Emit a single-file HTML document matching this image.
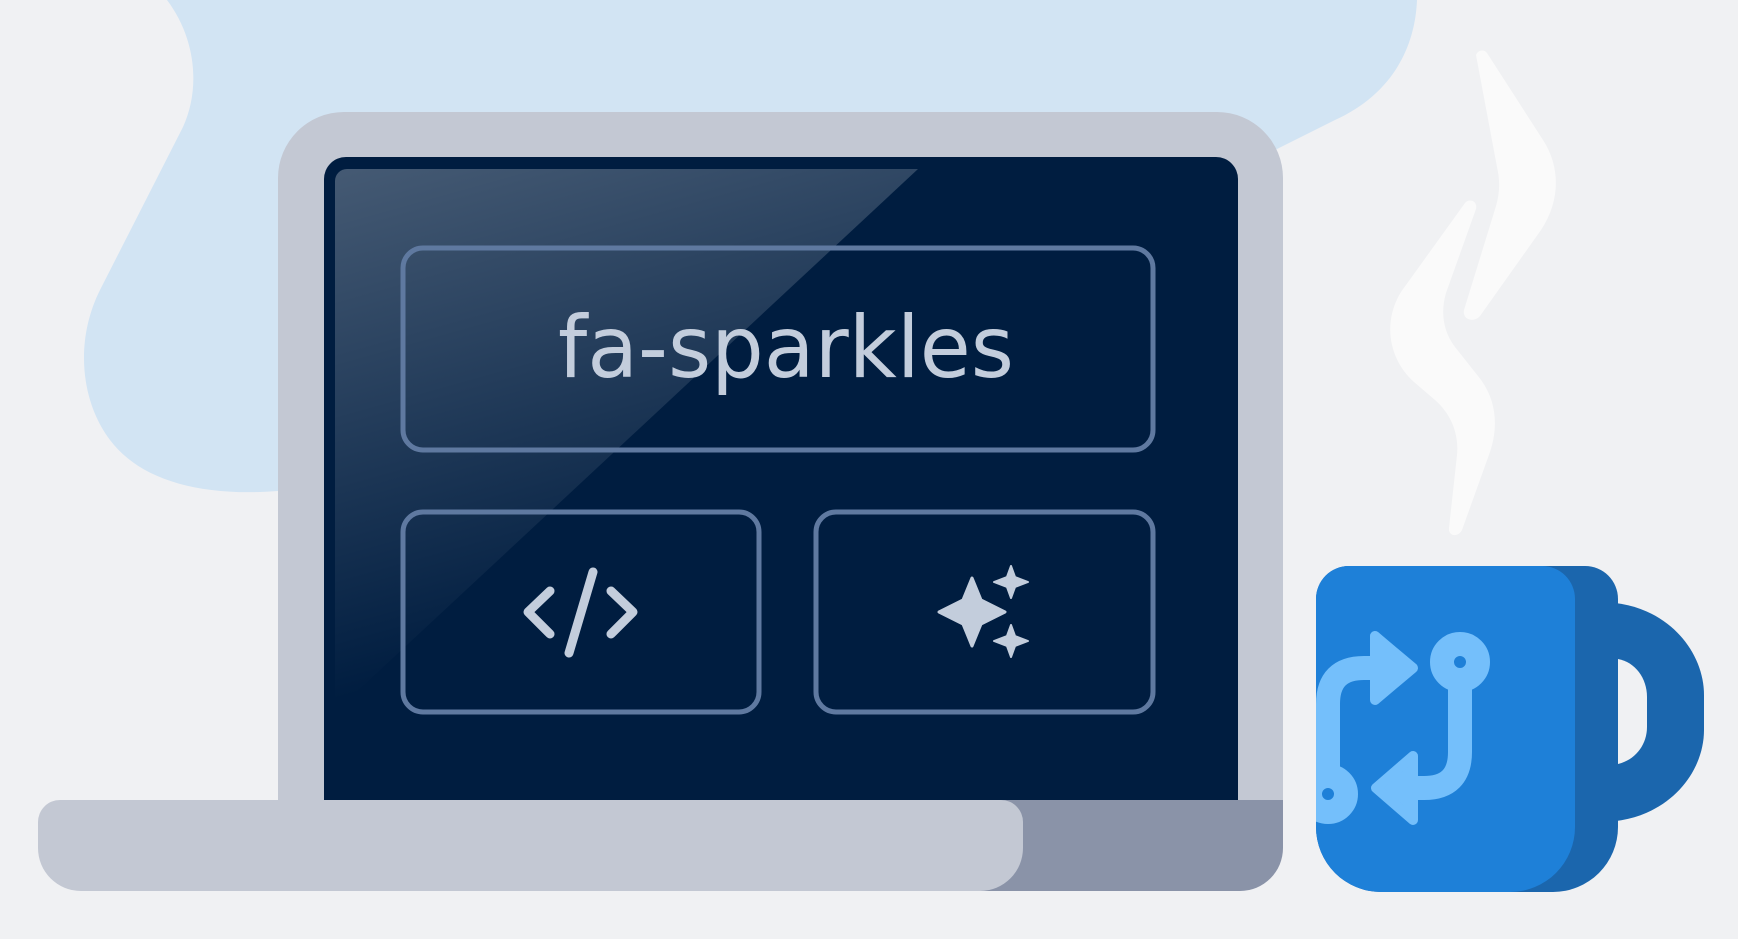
<!DOCTYPE html>
<html><head><meta charset="utf-8"><style>
html,body{margin:0;padding:0;background:#f0f1f3;}
svg{display:block}
</style></head><body>
<svg width="1738" height="939" viewBox="0 0 1738 939" xmlns="http://www.w3.org/2000/svg">
<defs>
<linearGradient id="gl" x1="0" y1="0" x2="0.3" y2="1">
<stop offset="0" stop-color="#ffffff" stop-opacity="0.27"/>
<stop offset="0.9" stop-color="#ffffff" stop-opacity="0"/>
</linearGradient>
<clipPath id="mugclip"><path d="M1349,566 H1542 A33,33 0 0 1 1575,599 V827 A65,65 0 0 1 1510,892 H1381 A65,65 0 0 1 1316,827 V599 A33,33 0 0 1 1349,566 Z"/></clipPath>
</defs>
<path fill="#d2e4f3" d="M167,0 H1417 C1415,50 1390,95 1335,120 L1275,150 L1275,500 L278,491 C200,497 140,480 110,440 C80,400 75,340 100,290 L183,127 C200,90 197,40 167,0 Z"/>
<path fill="#fafafa" d="M1476,55 C1478,50 1484,49 1487,53 L1543,140 C1560,166 1561,200 1541,230 L1480,316 C1474,323 1462,320 1464,310 L1496,206 C1500,192 1500,180 1497,167 Z"/>
<path fill="#fafafa" d="M1465,203 C1469,198 1478,201 1476,209 L1446,293 C1441,310 1442,330 1455,347 L1478,376 C1496,398 1499,425 1490,452 L1462,530 C1458,538 1448,536 1449,528 L1457,455 C1459,435 1452,415 1435,400 L1414,382 C1386,357 1382,315 1406,285 Z"/>
<path fill="#c3c8d3" d="M344,112 H1217 A66,66 0 0 1 1283,178 V800 H278 V178 A66,66 0 0 1 344,112 Z"/>
<path fill="#001d40" d="M346,157 H1216 A22,22 0 0 1 1238,179 V800 H324 V179 A22,22 0 0 1 346,157 Z"/>
<path fill="url(#gl)" d="M347,169 H918 L335,712 V181 A12,12 0 0 1 347,169 Z"/>
<g fill="none" stroke="#5f79a0" stroke-width="5">
<rect x="403" y="248" width="750" height="202" rx="20"/>
<rect x="403" y="512" width="356" height="200" rx="20"/>
<rect x="816" y="512" width="337" height="200" rx="20"/>
</g>
<text x="786" y="377" text-anchor="middle" font-family="DejaVu Sans, Liberation Sans, sans-serif" font-size="86" fill="#c3cddc" textLength="456" lengthAdjust="spacingAndGlyphs">fa-sparkles</text>
<g fill="none" stroke="#c3cddc" stroke-width="9" stroke-linecap="round" stroke-linejoin="round">
<path d="M550,591 L528,612 L550,634"/>
<path d="M593,572 L569,653"/>
<path d="M611,591 L633,612 L611,634"/>
</g>
<g fill="#c3cddc">
<path d="M972,578 L981,600 L1005,612 L981,624 L972,646 L963,624 L939,612 L963,600 Z" stroke="#c3cddc" stroke-width="3" stroke-linejoin="round"/>
<path d="M1011,566 L1015,577 L1028,582 L1015,587 L1011,598 L1007,587 L994,582 L1007,577 Z" stroke="#c3cddc" stroke-width="2" stroke-linejoin="round"/>
<path d="M1011,625 L1015,636 L1028,641 L1015,646 L1011,657 L1007,646 L994,641 L1007,636 Z" stroke="#c3cddc" stroke-width="2" stroke-linejoin="round"/>
</g>
<path fill="#8a93a8" d="M900,800 H1283 V848 A43,43 0 0 1 1240,891 H980 Z"/>
<path fill="#c3c8d3" d="M60,800 H1001 A22,22 0 0 1 1023,822 V848 A43,43 0 0 1 980,891 H81 A43,43 0 0 1 38,848 V822 A22,22 0 0 1 60,800 Z"/>
<path fill="#1b66ad" d="M1600,602 C1665,602 1704,650 1704,695 V730 C1704,775 1665,822 1600,822 Z"/>
<path fill="#f0f1f3" d="M1618,659 C1635,662 1647,678 1647,697 V727 C1647,745 1635,760 1618,764 Z"/>
<path fill="#1b66ad" d="M1349,566 H1585 A33,33 0 0 1 1618,599 V827 A65,65 0 0 1 1553,892 H1381 A65,65 0 0 1 1316,827 V599 A33,33 0 0 1 1349,566 Z"/>
<path fill="#1e80d8" d="M1349,566 H1542 A33,33 0 0 1 1575,599 V827 A65,65 0 0 1 1510,892 H1381 A65,65 0 0 1 1316,827 V599 A33,33 0 0 1 1349,566 Z"/>
<g clip-path="url(#mugclip)">
<g fill="none" stroke="#74bffb" stroke-width="24">
<path d="M1460,680 V752 Q1460,788 1424,788 H1405"/>
<path d="M1328,780 V704 Q1328,668 1364,668 H1385"/>
</g>
<circle cx="1460" cy="662" r="18" fill="none" stroke="#74bffb" stroke-width="24"/>
<circle cx="1328" cy="794" r="18" fill="none" stroke="#74bffb" stroke-width="24"/>
<path fill="#74bffb" stroke="#74bffb" stroke-width="10" stroke-linejoin="round" d="M1376,788 L1413,756 V820 Z"/>
<path fill="#74bffb" stroke="#74bffb" stroke-width="10" stroke-linejoin="round" d="M1413,668 L1375,636 V700 Z"/>
</g>
</svg>
</body></html>
